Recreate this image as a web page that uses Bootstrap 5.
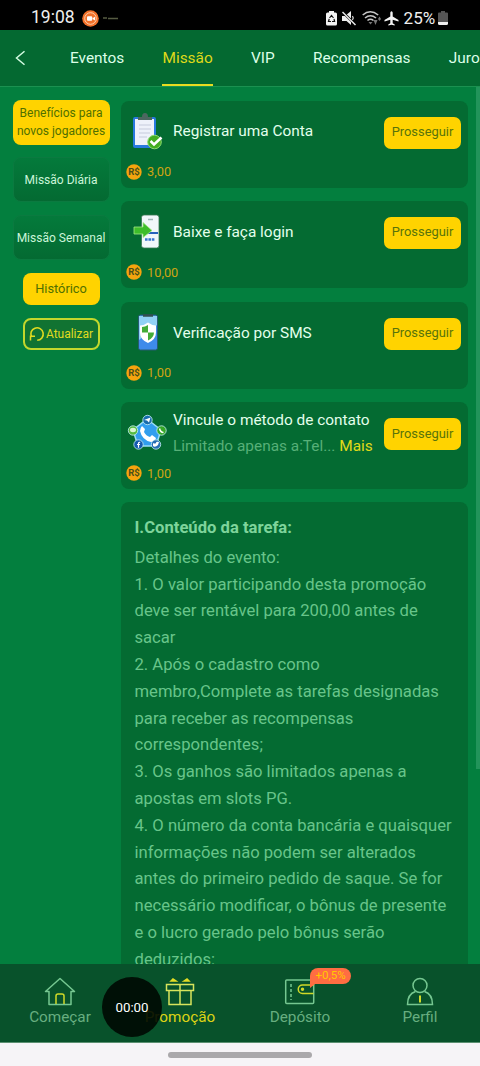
<!DOCTYPE html>
<html lang="pt-BR">
<head>
<meta charset="utf-8">
<meta name="viewport" content="width=device-width, initial-scale=1">
<title>Missão</title>
<link href="https://cdn.jsdelivr.net/npm/bootstrap@5.3.0/dist/css/bootstrap.min.css" rel="stylesheet">
<style>
body{font-family:Roboto,"Liberation Sans",sans-serif;background:#037f3e;color:#e3ffec;height:1066px;overflow:hidden;line-height:1.2}
svg{display:block;flex:none}
.status{height:30px;background:#000;color:#eee;font-size:17.5px;padding:6px 0 0 31px}
.status-icons{margin-left:208px}
.tabs{height:57px;background:#046931;border-bottom:1px solid #1b9150;padding-left:14px}
.tabs .tab{font-size:15.4px;color:#dcffe8;text-decoration:none;height:56px;line-height:56px;white-space:nowrap}
.tabs .tab.active{color:#dfd91a;box-shadow:inset 0 -2px #e8dc20}
.tab-row{gap:38.3px;margin-left:42px}
.main-area{height:877px}
.side{width:121px;padding:13px 11.500px 0 12.500px}
.side-btn{width:97px;height:45px;border-radius:8px;font-size:12px;line-height:18px;color:#cbf5d9;background:linear-gradient(#047a3b,#046a32);border:1px solid #0b7a40;white-space:nowrap}
.side-btn.active,.pill{background:#ffd300;color:#507000;border:0}
.side-btn.active{padding-bottom:2px!important}
.pill{width:77px;height:32px;border-radius:8px;font-size:12.8px}
.pill.line{background:#117332;border:2px solid #c3d72c;color:#e0db20;font-size:12px}
.list{width:347px;padding-top:13.6px;gap:13.6px}
.task{height:87px;border-radius:8px;background:#046b32;padding:0 7px 0 5px}
.task-main{height:60px;padding-top:2px}
.task-icon{width:42px;margin-right:5px}
.task-title{font-size:15.4px;white-space:nowrap}
.go{width:77px;height:32px;border-radius:7px;background:#ffd300;color:#58730b;font-size:12.9px;border:0;padding:0 0 2px;margin-top:2px}
.prize{font-size:12.8px;color:#cfa513;height:20px;padding-top:2px;gap:5px}
.muted-green{color:#57b078}
.more{color:#e0da18}
.terms{background:#046b32;border-radius:8px 8px 0 0;height:463px;overflow:hidden;padding:12.500px 0 0 13.500px;color:#68c58a;font-size:16.64px;line-height:26.8px;margin-top:-.6px;white-space:nowrap}
.terms h2{font-size:16.64px;font-weight:700;line-height:26px;margin:0 0 4px;color:#7ed49b}
.scroll{width:4px;height:682px;background:#22945a}
.bottom{height:79px;background:#08522b;border-bottom:1px solid #5c9072}
.bottom a{width:120px;color:#67ae80;text-decoration:none;font-size:15.3px;padding-top:12px}
.bottom a.active{color:#ddd315}
.bottom a span{line-height:20px}
.promo{left:310px;top:968px;width:41px;height:16px;border-radius:8px 8px 8px 0;background:#ff6d42;color:#ffc900;font-size:11.5px;line-height:15px}
.promo::after{content:"";position:absolute;left:0;bottom:-4px;border-top:4px solid #ff6d42;border-right:5px solid transparent}
.rec{left:102px;top:977px;width:60px;height:60px;background:rgba(0,10,2,.91);color:#fff;font-size:13.3px;padding-top:2px}
.gesture{height:23px;background:#f6f4f7}
.gesture i{width:144px;height:6px;background:#aaa8ab}
</style>
</head>
<body>
<header class="status d-flex align-items-center">
  <span class="lh-1">19:08</span>
  <svg style="margin-left:7px" width="17" height="17" viewBox="0 0 17 17"><circle cx="8.5" cy="8.5" r="8.3" fill="#f3712a"/><circle cx="8.5" cy="8.5" r="5.8" fill="none" stroke="#ffd9b8" stroke-width=".9"/><rect x="5" y="6.200" width="5.200" height="4.600" rx="1" fill="#fff"/><path d="M10.500 8.200l2.500-1.500v3.800l-2.500-1.500z" fill="#fff"/></svg>
  <svg class="ms-1" width="15" height="5"><path d="M0 2h4M5 2.500h10" stroke="#565b42" stroke-width="1.500"/></svg>
  <div class="status-icons d-flex align-items-center">
    <svg width="11" height="15" viewBox="0 0 11 15"><path d="M3 0h5v1.500h1.500Q11 1.500 11 3v10q0 1.500-1.500 1.500h-8Q0 14.500 0 13V3q0-1.500 1.500-1.500H3z" fill="#f3f3f3"/><path d="M3.500 7L5.500 4.500 7.500 7M8 8l.6 2.500H6M5 10.500H2.500L3.200 8" fill="none" stroke="#111" stroke-width="1.200"/></svg>
    <svg style="margin-left:5px" width="14" height="15" viewBox="0 0 14 15"><path d="M0 5h3l6-5v14L4.500 10H0z" fill="#eee"/><path d="M0 .5l13.500 13" stroke="#000" stroke-width="2.500"/><path d="M.5 1l13 13" stroke="#eee" stroke-width="1.500"/><path d="M10.500 5q1.500 2 0 4" stroke="#eee" stroke-width="1.200" fill="none"/></svg>
    <svg style="margin-left:6px" width="19" height="16" viewBox="0 0 19 16"><g fill="none" stroke="#c6c6c6" stroke-width="1.600"><path d="M.7 5q7.500-6.500 15.500 0M3 8q5.500-4.500 11 0M5.500 10.500q3-2.500 6 0"/></g><path d="M6.500 12h4l-2 2.500zM11.500 10l2 5 2-5zM16 9l1.500-2.500L19 9l-1.500 2z" fill="#777"/></svg>
    <svg style="margin-left:3px" width="15" height="15" viewBox="0 0 15 15"><path d="M6.300 1.500q1.200-2.500 2.400 0V5.500L14.500 9v1.500l-5.800-1.700v3.500l2 1.300v1l-3.200-.8-3.200.8v-1l2-1.300V8.800L.5 10.500V9l5.800-3.500z" fill="#f4f4f4"/></svg>
    <span class="lh-1" style="margin-left:5px;font-size:17px">25%</span>
    <svg style="margin-left:3px" width="10" height="15" viewBox="0 0 10 15"><path d="M3 0h4v1.500h2q1 0 1 1v9H0v-9q0-1 1-1h2z" fill="#555"/><path d="M0 11h10v1.500q0 1.500-1.500 1.500h-7Q0 14 0 12.500z" fill="#eee"/></svg>
  </div>
</header>

<nav class="tabs d-flex align-items-center overflow-hidden">
  <svg width="14" height="16" viewBox="0 0 14 16"><path d="M10.500 1.200L2.500 8l8 6.800" fill="none" stroke="#d2fbe0" stroke-width="1.500"/></svg>
  <div class="tab-row d-flex">
    <a class="tab" href="#">Eventos</a><a class="tab active" href="#">Missão</a><a class="tab" href="#">VIP</a><a class="tab" href="#">Recompensas</a><a class="tab" href="#">Juros</a>
  </div>
</nav>

<main class="main-area d-flex overflow-hidden">
  <aside class="side d-flex flex-column align-items-center flex-shrink-0">
    <button class="side-btn active p-0">Benefícios para<br>novos jogadores</button>
    <button class="side-btn p-0" style="margin-top:12px">Missão Diária</button>
    <button class="side-btn p-0" style="margin-top:13px">Missão Semanal</button>
    <button class="pill p-0" style="margin-top:13px">Histórico</button>
    <button class="pill line p-0 d-flex align-items-center justify-content-center" style="margin-top:13px">
      <svg width="16" height="16" viewBox="0 0 16 16"><path d="M2.600 11A6.200 6.200 0 1 1 8.200 14.200" fill="none" stroke="#e0db20" stroke-width="1.600"/><path d="M1.500 14.500V10.300h4.500" fill="none" stroke="#e0db20" stroke-width="1.500"/></svg><span style="margin-left:1px">Atualizar</span>
    </button>
  </aside>

  <section class="list d-flex flex-column flex-shrink-0">
    <article class="task flex-shrink-0">
      <div class="task-main d-flex align-items-center">
        <div class="task-icon"><svg width="42" height="42" viewBox="0 0 42 42"><rect x="7" y="6" width="23" height="31" rx="2" fill="#2879de"/><path d="M9 8h19v26H9z" fill="#eef1fa"/><path d="M12 6h4q0-4 3-4t3 4h4v3H12z" fill="#4c6760"/><path d="M13 14h12M13 18h12M13 22h11M13 26h8" stroke="#d3d8e6" stroke-width="1.300"/><circle cx="28.500" cy="31" r="6.800" fill="#43ad20" stroke="#8edb72"/><path d="M24.500 30l3.500 3.500 7.500-7" fill="none" stroke="#fff" stroke-width="2.500"/></svg></div>
        <div class="task-title">Registrar uma Conta</div>
        <button class="go ms-auto">Prosseguir</button>
      </div>
      <div class="prize d-flex align-items-center"><svg width="16" height="16" viewBox="0 0 16 16"><circle cx="8" cy="8" r="7.700" fill="#f5a40e"/><text x="8" y="11.300" text-anchor="middle" font-size="9.500" font-weight="700" fill="#49501a">R$</text></svg><span>3,00</span></div>
    </article>

    <article class="task flex-shrink-0">
      <div class="task-main d-flex align-items-center">
        <div class="task-icon"><svg width="42" height="42" viewBox="0 0 42 42"><rect x="15.500" y="4" width="17.500" height="33" rx="2.500" fill="#f1f7fa" stroke="#397651" stroke-width=".8"/><path d="M22 8.500h5" stroke="#9db5b5" stroke-width="1.500"/><path d="M17 22h15" stroke="#2662bc" stroke-width="2"/><path d="M19 28.500h10" stroke="#3975ce" stroke-width="2.500" stroke-dasharray="2.600 .8"/><path d="M8 16h9v-4.500l9 8-9 7V23H8z" fill="#3ebd2b" stroke="#a2e983" stroke-width=".8"/></svg></div>
        <div class="task-title">Baixe e faça login</div>
        <button class="go ms-auto">Prosseguir</button>
      </div>
      <div class="prize d-flex align-items-center"><svg width="16" height="16" viewBox="0 0 16 16"><circle cx="8" cy="8" r="7.700" fill="#f5a40e"/><text x="8" y="11.300" text-anchor="middle" font-size="9.500" font-weight="700" fill="#49501a">R$</text></svg><span>10,00</span></div>
    </article>

    <article class="task flex-shrink-0">
      <div class="task-main d-flex align-items-center">
        <div class="task-icon"><svg width="42" height="42" viewBox="0 0 42 42"><rect x="12.500" y="3" width="19" height="35" rx="2" fill="#3e8bea" stroke="#275b73"/><path d="M13 4h18v9L13 28z" fill="#91d1f5"/><path d="M17 3.500h10" stroke="#324e51" stroke-width="2.500"/><path d="M22 10.500q4 3 8 3v7q0 7-8 10.500-8-3.500-8-10.500v-7q4 0 8-3z" fill="#fff"/><path d="M22 13v7.500h-6V15q3 0 6-2zM22 20.500h6q0 5-6 8z" fill="#43ac39"/></svg></div>
        <div class="task-title">Verificação por SMS</div>
        <button class="go ms-auto">Prosseguir</button>
      </div>
      <div class="prize d-flex align-items-center"><svg width="16" height="16" viewBox="0 0 16 16"><circle cx="8" cy="8" r="7.700" fill="#f5a40e"/><text x="8" y="11.300" text-anchor="middle" font-size="9.500" font-weight="700" fill="#49501a">R$</text></svg><span>1,00</span></div>
    </article>

    <article class="task flex-shrink-0">
      <div class="task-main d-flex align-items-center">
        <div class="task-icon"><svg width="42" height="42" viewBox="0 0 42 42"><path d="M21 7L35 18l-5 16H12L7 18z" fill="#319eee" stroke="#9bddf8" stroke-width="1.500"/><path d="M16 14l3 3-1 3q2 4 6 5l2-2 4 3q-1 4-5 4-9-2-11-11 0-3 2-5z" fill="#fff"/><g stroke="#c5edf5" stroke-width=".8"><circle cx="21.500" cy="8" r="4.700" fill="#176bad"/><circle cx="7" cy="18.500" r="4.700" fill="#55ba40"/><circle cx="35.500" cy="18.500" r="4.700" fill="#35a727"/><circle cx="12.500" cy="32.500" r="4.700" fill="#155ab0"/><circle cx="30" cy="32.500" r="4.700" fill="#246db5"/></g><path d="M18 8l6.500-2.500-1.500 5-2-2zM27 31q2 1 3 0 0-2 3-1l-1 3q-3 3-5 1z" fill="#fff"/><path d="M12.500 35.800v-4.500q0-1.300 1.700-1M11 32.500h3" fill="none" stroke="#fff" stroke-width="1.200"/><ellipse cx="7" cy="18" rx="3" ry="2.200" fill="#d8f6d1"/><path d="M33.500 16.500q1 4 4 4" stroke="#fff" stroke-width="1.500" fill="none"/></svg></div>
        <div><div class="task-title">Vincule o método de contato</div><div class="task-title" style="margin-top:8px"><span class="muted-green">Limitado apenas a:Tel...</span> <span class="more">Mais</span></div></div>
        <button class="go ms-auto">Prosseguir</button>
      </div>
      <div class="prize d-flex align-items-center"><svg width="16" height="16" viewBox="0 0 16 16"><circle cx="8" cy="8" r="7.700" fill="#f5a40e"/><text x="8" y="11.300" text-anchor="middle" font-size="9.500" font-weight="700" fill="#49501a">R$</text></svg><span>1,00</span></div>
    </article>

    <article class="terms flex-shrink-0">
      <h2>I.Conteúdo da tarefa:</h2>
      Detalhes do evento:<br>1. O valor participando desta promoção<br>deve ser rentável para 200,00 antes de<br>sacar<br>2. Após o cadastro como<br>membro,Complete as tarefas designadas<br>para receber as recompensas<br>correspondentes;<br>3. Os ganhos são limitados apenas a<br>apostas em slots PG.<br>4. O número da conta bancária e quaisquer<br>informações não podem ser alterados<br>antes do primeiro pedido de saque. Se for<br>necessário modificar, o bônus de presente<br>e o lucro gerado pelo bônus serão<br>deduzidos:
    </article>
  </section>
  <div class="scroll ms-auto"></div>
</main>

<nav class="bottom d-flex">
  <a class="d-flex flex-column align-items-center" href="#"><svg width="32" height="31" viewBox="0 0 32 31" fill="none" stroke="#75c791" stroke-width="1.500"><path d="M5 15.500H1.500L16 2.500l14.500 13H27V28.500H5z" stroke-linejoin="round"/><path d="M12 28V20q0-2 2-2h4q2 0 2 2v8" stroke="#d0d928"/></svg><span>Começar</span></a>
  <a class="active d-flex flex-column align-items-center" href="#"><svg width="32" height="31" viewBox="0 0 32 31" fill="none" stroke="#d7e45c" stroke-width="1.500"><path d="M2.500 8.500h27v6h-27zM5 14.500v14h22v-14M16 9v19.500"/><path d="M7 5l2-2 3 2zM20 5l3-2 2 2z" fill="#e5dd24" stroke="#e5dd24"/></svg><span>Promoção</span></a>
  <a class="d-flex flex-column align-items-center" href="#"><svg width="32" height="31" viewBox="0 0 32 31" fill="none" stroke="#75c791" stroke-width="1.500"><rect x="1.700" y="4" width="28" height="23.500" rx="1"/><path d="M7 8v16" stroke-dasharray="3 2"/><path d="M29.500 9h-11a4.200 4.200 0 0 0 0 8.500h11" stroke="#d0d928"/><circle cx="18.500" cy="13.200" r="1" fill="#d0d928" stroke="#d0d928"/></svg><span>Depósito</span></a>
  <a class="d-flex flex-column align-items-center" href="#"><svg width="32" height="31" viewBox="0 0 32 31" fill="none" stroke="#75c791" stroke-width="1.500"><circle cx="16" cy="9.500" r="7"/><path d="M11.500 15.500Q3.500 18 3.500 28.500h25q0-10.500-8-13"/><path d="M16 19.500v7" stroke="#d0d928" stroke-width="2"/></svg><span>Perfil</span></a>
</nav>
<footer class="gesture d-flex align-items-center justify-content-center"><i class="rounded-pill"></i></footer>
<span class="promo position-absolute text-center">+0,5%</span>
<div class="rec position-absolute rounded-circle d-flex align-items-center justify-content-center">00:00</div>
<script src="https://cdn.jsdelivr.net/npm/bootstrap@5.3.0/dist/js/bootstrap.bundle.min.js"></script>
</body>
</html>
